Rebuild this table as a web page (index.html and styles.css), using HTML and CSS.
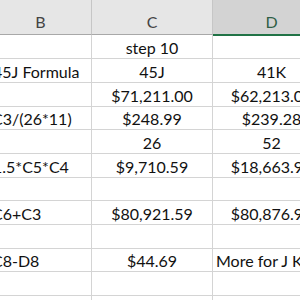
FILE: index.html
```html
<!DOCTYPE html>
<html>
<head>
<meta charset="utf-8">
<link rel="stylesheet" href="styles.css">
</head>
<body>
<div class="sheet">
  <div class="hd">B</div><div class="hd">C</div><div class="hd sel">D</div>

  <div class="c l"></div><div class="c">step 10</div><div class="c"></div>
  <div class="c l">45J Formula</div><div class="c">45J</div><div class="c">41K</div>
  <div class="c l"></div><div class="c">$71,211.00</div><div class="c">$62,213.00</div>
  <div class="c l s">C3/(26*11)</div><div class="c">$248.99</div><div class="c">$239.28</div>
  <div class="c l"></div><div class="c">26</div><div class="c">52</div>
  <div class="c l">1.5*C5*C4</div><div class="c">$9,710.59</div><div class="c">$18,663.95</div>
  <div class="c l"></div><div class="c"></div><div class="c"></div>
  <div class="c l s">C6+C3</div><div class="c">$80,921.59</div><div class="c">$80,876.95</div>
  <div class="c l"></div><div class="c"></div><div class="c"></div>
  <div class="c l s">C8-D8</div><div class="c">$44.69</div><div class="c l">More for J K</div>
  <div class="c l"></div><div class="c"></div><div class="c"></div>
  <div class="c l"></div><div class="c"></div><div class="c"></div>
</div>
</body>
</html>
```
FILE: styles.css
```css
html, body {
  margin: 0;
  padding: 0;
  background: #ffffff;
  overflow: hidden;
  width: 300px;
  height: 300px;
}
.sheet {
  margin-left: -10px;
  display: grid;
  grid-template-columns: 102px 121px 118px;
  grid-template-rows: 35px 24px 24px 24px 23px 24px 24px 23px 24px 24px 23px 24px 24px;
  width: 341px;
  font-family: Lato, "Open Sans", sans-serif;
  font-size: 16px;
  color: #111111;
}
.hd {
  background: #e6e6e6;
  border-bottom: 1px solid #a8a8a8;
  border-right: 1px solid #c6c6c6;
  color: #444444;
  font-size: 16px;
  display: flex;
  align-items: flex-end;
  justify-content: center;
  padding-bottom: 3px;
  box-sizing: border-box;
}
.hd.sel {
  background: #d3d3d3;
  color: #2f5f45;
  border-bottom: 2px solid #217346;
  margin-bottom: -1px;
}
.c {
  border-right: 1px solid #d4d4d4;
  border-bottom: 1px solid #d4d4d4;
  display: flex;
  align-items: center;
  justify-content: center;
  padding: 1px 3px 0;
  white-space: nowrap;
  overflow: visible;
  box-sizing: border-box;
}
.c.l {
  justify-content: flex-start;
}
.c.s {
  padding-left: 2px;
}
```
